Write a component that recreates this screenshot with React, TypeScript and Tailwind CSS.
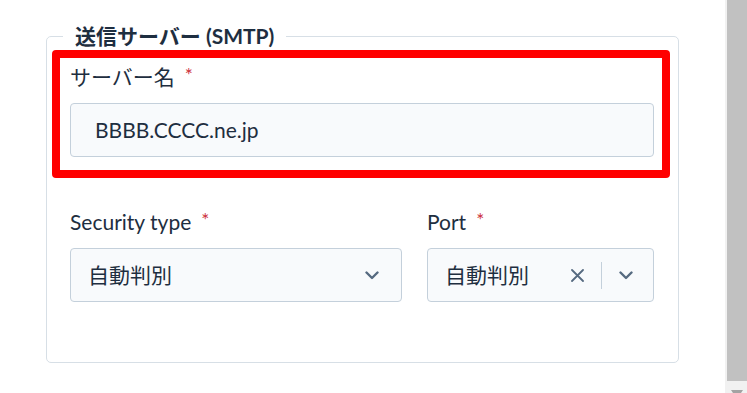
function Chevron() {
  return (
    <svg width="14" height="9" viewBox="0 0 14 9" fill="none">
      <path d="M1.5 1.5 7 7l5.5-5.5" stroke="#566a80" strokeWidth="2.4" strokeLinecap="round" strokeLinejoin="round" />
    </svg>
  );
}

function Cross() {
  return (
    <svg width="13" height="13" viewBox="0 0 13 13" fill="none">
      <path d="M1 1l11 11M12 1 1 12" stroke="#566a80" strokeWidth="1.8" strokeLinecap="round" />
    </svg>
  );
}

function Label({ text }: { text: string }) {
  return (
    <p className="text-[21px] leading-[24px] text-[#1e2e40]">
      {text}
      <span className="ml-[10px] align-top text-[19px] leading-none text-[#cc2f3a]">*</span>
    </p>
  );
}

export default function App() {
  return (
    <div className="flex w-[747px] h-[393px] overflow-hidden bg-white font-['Lato','Noto_Sans_CJK_JP',sans-serif]">
      <main className="flex-1 px-[46px] pt-[24px]">
        <fieldset className="border border-[#d7dfe6] rounded-[5px] pb-[60px]">
          <legend className="ml-[16px] px-3 text-[21px] leading-[24px] font-bold text-[#1e2e40]">
            送信サーバー (SMTP)
          </legend>

          <div className="ml-[5px] mt-[2px] w-[618px] border-[8px] border-[#ff0000] rounded-[4px] pl-[10px] pt-[7px] pb-[13px]">
            <Label text="サーバー名" />
            <div className="mt-[14px] flex items-center w-[584px] h-[54px] pl-[24px] bg-[#f8fafc] border border-[#c4d0db] rounded-[4px] text-[21px] text-[#1e2e40]">
              BBBB.CCCC.ne.jp
            </div>
          </div>

          <div className="ml-[23px] mt-[32px] flex gap-[25px]">
            <div className="w-[332px]">
              <Label text="Security type" />
              <div className="mt-[14px] flex items-center justify-between h-[54px] pl-[17px] pr-[22px] bg-[#f8fafc] border border-[#c4d0db] rounded-[4px] text-[21px] text-[#1e2e40]">
                <span>自動判別</span>
                <Chevron />
              </div>
            </div>
            <div className="w-[227px]">
              <Label text="Port" />
              <div className="mt-[14px] flex items-center h-[54px] pl-[17px] pr-[20px] bg-[#f8fafc] border border-[#c4d0db] rounded-[4px] text-[21px] text-[#1e2e40]">
                <span className="flex-1">自動判別</span>
                <Cross />
                <div className="mx-[17px] w-px h-[27px] bg-[#c4d0db]" />
                <Chevron />
              </div>
            </div>
          </div>
        </fieldset>
      </main>

      <div className="flex flex-col w-[22px] bg-[#f1f1f1] pl-[2px]">
        <div className="h-[381px] bg-[#c1c1c1]" />
        <div className="flex-1 flex items-end justify-center">
          <svg width="12" height="3" viewBox="0 0 12 3">
            <path d="M0 0h12L10 3H2z" fill="#a3a3a3" />
          </svg>
        </div>
      </div>
    </div>
  );
}
